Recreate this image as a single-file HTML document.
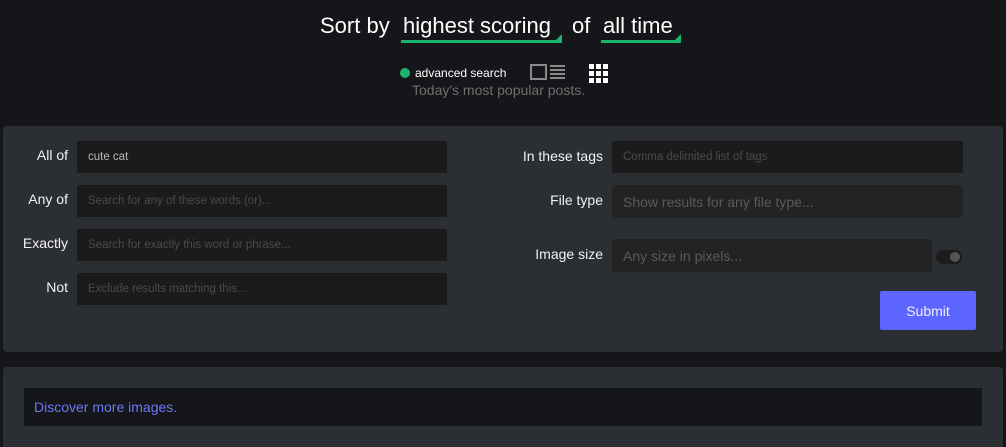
<!DOCTYPE html>
<html style="width:1006px;height:447px;overflow:hidden"><head><style>
*{margin:0;padding:0;box-sizing:border-box}
body{width:1006px;height:447px;overflow:hidden;background:#151619;font-family:"Liberation Sans",sans-serif;color:#fff;position:relative}
.a{position:absolute}
.lbl{position:absolute;font-size:14px;color:#f2f2f2;text-align:right;white-space:nowrap}
.in{position:absolute;background:#1b1b1b;font-size:11.5px;color:#4a4a4a;padding-left:11px;display:flex;align-items:center}
.sel{position:absolute;font-size:22px;color:#fff;border-bottom:3px solid #1bb46e;line-height:28px;padding:0 2px}
.sel:after{content:"";position:absolute;right:0;bottom:0;border-left:6px solid transparent;border-bottom:6px solid #1bb46e}
</style></head><body>
<div class="a" style="left:320px;top:12px;font-size:22px;line-height:28px">Sort by</div>
<div class="sel" style="left:401px;top:12px;width:161px">highest scoring</div>
<div class="a" style="left:572px;top:12px;font-size:22px;line-height:28px">of</div>
<div class="sel" style="left:601px;top:12px;width:80px">all time</div>
<div class="a" style="left:400px;top:68px;width:10px;height:10px;border-radius:50%;background:#1bb46e"></div>
<div class="a" style="left:415px;top:66px;font-size:12px;color:#fff">advanced search</div>
<div class="a" style="left:530px;top:64px;width:17px;height:16px;border:2px solid #8a8a8a"></div>
<div class="a" style="left:550px;top:65px;width:15px;height:14px;background:repeating-linear-gradient(#8a8a8a 0 2px,transparent 2px 4px)"></div>
<svg class="a" style="left:589px;top:64px" width="19" height="19"><g fill="#fff"><rect x="0" y="0" width="5" height="5"/><rect x="7" y="0" width="5" height="5"/><rect x="14" y="0" width="5" height="5"/><rect x="0" y="7" width="5" height="5"/><rect x="7" y="7" width="5" height="5"/><rect x="14" y="7" width="5" height="5"/><rect x="0" y="14" width="5" height="5"/><rect x="7" y="14" width="5" height="5"/><rect x="14" y="14" width="5" height="5"/></g></svg>
<div class="a" style="left:412px;top:82px;font-size:14px;color:#6e6e6e">Today's most popular posts.</div>

<div class="a" style="left:3px;top:126px;width:1000px;height:226px;background:#2b2e33;border-radius:4px"></div>
<div class="lbl" style="right:938px;top:147px">All of</div>
<div class="lbl" style="right:938px;top:191px">Any of</div>
<div class="lbl" style="right:938px;top:235px">Exactly</div>
<div class="lbl" style="right:938px;top:279px">Not</div>
<div class="in" style="left:77px;top:141px;width:370px;height:32px;color:#b8b8b8">cute cat</div>
<div class="in" style="left:77px;top:185px;width:370px;height:32px">Search for any of these words (or)...</div>
<div class="in" style="left:77px;top:229px;width:370px;height:32px">Search for exactly this word or phrase...</div>
<div class="in" style="left:77px;top:273px;width:370px;height:32px">Exclude results matching this...</div>

<div class="lbl" style="right:403px;top:148px">In these tags</div>
<div class="lbl" style="right:403px;top:192px">File type</div>
<div class="lbl" style="right:403px;top:246px">Image size</div>
<div class="in" style="left:612px;top:141px;width:351px;height:32px">Comma delimited list of tags</div>
<div class="in" style="left:612px;top:185px;width:351px;height:33px;background:#232323;border-radius:4px;font-size:14px;color:#5a5a5a">Show results for any file type...</div>
<div class="in" style="left:612px;top:239px;width:320px;height:33px;background:#232323;border-radius:4px;font-size:14px;color:#5a5a5a">Any size in pixels...</div>
<div class="a" style="left:936px;top:250px;width:26px;height:14px;border-radius:7px;background:#1c1c1c"></div>
<div class="a" style="left:950px;top:252px;width:10px;height:10px;border-radius:50%;background:#555"></div>
<div class="a" style="left:880px;top:291px;width:96px;height:39px;background:#5c66ff;border-radius:2px;font-size:14px;color:#f0f0ff;display:flex;align-items:center;justify-content:center">Submit</div>

<div class="a" style="left:3px;top:367px;width:1000px;height:80px;background:#2b2e33;border-radius:4px 4px 0 0"></div>
<div class="a" style="left:24px;top:388px;width:958px;height:38px;background:#151619;font-size:14px;color:#6b78f5;padding-left:10px;line-height:38px">Discover more images.</div>
</body></html>
